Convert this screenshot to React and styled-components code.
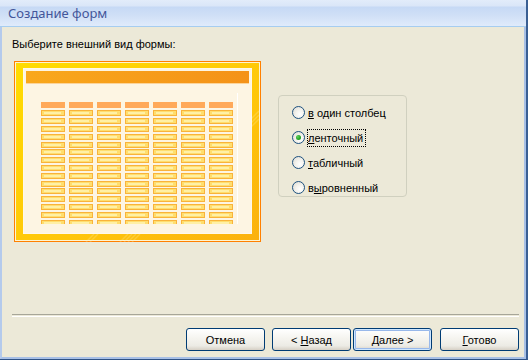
import React from 'react';
import styled, { createGlobalStyle } from 'styled-components';

const GlobalStyle = createGlobalStyle`
  html, body {
    margin: 0;
    padding: 0;
    background: #ece9d8;
  }
  body {
    font-family: 'Liberation Sans', Arial, sans-serif;
  }
`;

const COLS = 7;
const ROW_TOPS = [49, 57, 65, 73, 81, 88, 96, 104, 112, 120, 127, 135, 143, 151, 159];

const options = [
  { pre: '', key: 'в', post: ' один столбец' },
  { pre: '', key: 'л', post: 'енточный', checked: true },
  { pre: '', key: 'т', post: 'абличный' },
  { pre: 'в', key: 'ы', post: 'ровненный' },
];

const buttons = [
  { label: 'Отмена', gap: 0 },
  { pre: '< ', key: 'Н', post: 'азад', gap: 7 },
  { key: 'Д', post: 'алее >', gap: 2, isDefault: true },
  { key: 'Г', post: 'отово', gap: 8 },
];

const Preview = () => (
  <svg width="247" height="181" viewBox="0 0 247 181">
    <defs>
      <linearGradient id="frame" x1="0" y1="0" x2="1" y2="1">
        <stop offset="0" stopColor="#ffdc00" />
        <stop offset="0.6" stopColor="#ffc60a" />
        <stop offset="1" stopColor="#fbb10e" />
      </linearGradient>
      <linearGradient id="head" x1="0" y1="0" x2="1" y2="0">
        <stop offset="0" stopColor="#f9a81c" />
        <stop offset="1" stopColor="#f49218" />
      </linearGradient>
      <clipPath id="table">
        <rect x="0" y="0" width="247" height="163" />
      </clipPath>
    </defs>
    <rect x="0.5" y="0.5" width="246" height="180" fill="#fff4d0" stroke="#ff8000" />
    <rect x="2" y="2" width="243" height="177" fill="url(#frame)" />
    <g opacity="0.25" stroke="#fff3b0" strokeWidth="1.5">
      <line x1="72" y1="181" x2="80" y2="173" />
      <line x1="76" y1="181" x2="84" y2="173" />
      <line x1="106" y1="181" x2="114" y2="173" />
      <line x1="110" y1="181" x2="118" y2="173" />
      <line x1="114" y1="181" x2="122" y2="173" />
      <line x1="118" y1="181" x2="126" y2="173" />
      <line x1="237" y1="58" x2="245" y2="50" />
      <line x1="237" y1="62" x2="245" y2="54" />
      <line x1="237" y1="66" x2="245" y2="58" />
    </g>
    <rect x="9.5" y="7.5" width="228" height="165" fill="#fdf5e3" stroke="#fff8ea" />
    <rect x="12" y="10" width="223" height="12" fill="url(#head)" />
    <rect x="12" y="22" width="223" height="1" fill="#fcd49a" />
    <rect x="223" y="32" width="1" height="131" fill="#ffffff" />
    {Array.from({ length: COLS }).map((_, c) => (
      <rect key={'h' + c} x={27 + c * 28} y="41" width="24" height="6" fill="#ffa95a" />
    ))}
    <g clipPath="url(#table)">
      {ROW_TOPS.map((y) =>
        Array.from({ length: COLS }).map((_, c) => {
          const x = 27 + c * 28;
          return (
            <g key={y + '-' + c}>
              <rect x={x} y={y} width="24" height="6" fill="#f9b33a" />
              <rect x={x + 1} y={y + 1} width="22" height="4" fill="#ffde6e" />
              <rect x={x + 3} y={y + 2} width="17" height="2" fill="#fff0a6" />
            </g>
          );
        })
      )}
    </g>
  </svg>
);

const App = () => (
  <>
    <GlobalStyle />
    <Window>
      <TitleBar>Создание форм</TitleBar>
      <Body>
        <Prompt>Выберите внешний вид формы:</Prompt>
        <Row>
          <PreviewBox>
            <Preview />
          </PreviewBox>
          <Group>
            {options.map((o, i) => (
              <RadioRow key={i}>
                <RadioCircle $checked={o.checked} />
                <RadioLabel $focused={o.checked}>
                  {o.pre}
                  <u>{o.key}</u>
                  {o.post}
                </RadioLabel>
              </RadioRow>
            ))}
          </Group>
        </Row>
        <Separator />
        <ButtonBar>
          {buttons.map((b, i) => (
            <Button key={i} $gap={b.gap} $default={b.isDefault}>
              {b.label ? (
                b.label
              ) : (
                <span>
                  {b.pre}
                  <u>{b.key}</u>
                  {b.post}
                </span>
              )}
            </Button>
          ))}
        </ButtonBar>
      </Body>
    </Window>
  </>
);

export default App;

const Window = styled.div`
  width: 528px;
  height: 360px;
  box-sizing: border-box;
  display: flex;
  flex-direction: column;
  border-right: 2px solid #3a5f93;
  border-bottom: 1px solid #2f5285;
  background: #ece9d8;
  overflow: hidden;
`;

const TitleBar = styled.div`
  height: 26px;
  flex-shrink: 0;
  box-sizing: border-box;
  padding-left: 8px;
  border-bottom: 1px solid #a6cdf0;
  background: linear-gradient(
    #e2ecfa 0,
    #dae6f8 6px,
    #c6d9f5 7px,
    #cfdff6 15px,
    #e0ebfb 26px
  );
  color: #43569a;
  font-family: 'Noto Sans', 'Open Sans', sans-serif;
  font-size: 13px;
  line-height: 27px;
  height: 27px;
`;

const Body = styled.div`
  flex: 1;
  display: flex;
  flex-direction: column;
  box-sizing: border-box;
  border-left: 2px solid #b4caec;
  border-right: 2px solid #a8c0e6;
  border-bottom: 2px solid #a8c0e6;
  padding: 10px 0 6px 10px;
  font-size: 11px;
  color: #000;
`;

const Prompt = styled.div`
  line-height: 14px;
  height: 14px;
`;

const Row = styled.div`
  display: flex;
  align-items: flex-start;
  margin-top: 10px;
  padding-left: 2px;
`;

const PreviewBox = styled.div`
  width: 247px;
  height: 181px;
  svg {
    display: block;
  }
`;

const Group = styled.div`
  margin-left: 17px;
  margin-top: 34px;
  width: 129px;
  height: 102px;
  box-sizing: border-box;
  border: 1px solid #d0d0bf;
  border-radius: 4px;
  padding: 4px 0 0 13px;
`;

const RadioRow = styled.div`
  display: flex;
  align-items: center;
  height: 25px;
`;

const RadioCircle = styled.span`
  width: 13px;
  height: 13px;
  box-sizing: border-box;
  border-radius: 50%;
  border: 1px solid #1c5180;
  background: radial-gradient(circle at 65% 65%, #ffffff 0, #f4f3ee 40%, #dcd9cf 100%);
  position: relative;
  flex-shrink: 0;

  &::after {
    content: '';
    display: ${(p) => (p.$checked ? 'block' : 'none')};
    position: absolute;
    left: 3px;
    top: 3px;
    width: 5px;
    height: 5px;
    border-radius: 50%;
    background: radial-gradient(circle at 35% 35%, #5fd25f 0, #21a121 60%, #1a8a1a 100%);
  }
`;

const RadioLabel = styled.span`
  margin-left: ${(p) => (p.$focused ? '2px' : '3px')};
  line-height: 14px;
  padding: ${(p) => (p.$focused ? '1px 2px 1px 0' : '0')};
  border: ${(p) => (p.$focused ? '1px dotted #000' : 'none')};
  white-space: nowrap;
  u {
    text-decoration-thickness: 1px;
  }
`;

const Separator = styled.div`
  margin: auto 5px 0 0;
  height: 1px;
  border-top: 1px solid #a7a699;
  border-bottom: 1px solid #ffffff;
`;

const ButtonBar = styled.div`
  display: flex;
  justify-content: flex-end;
  margin-top: 11px;
  padding-right: 5px;
`;

const Button = styled.button`
  width: 79px;
  height: 23px;
  margin-left: ${(p) => p.$gap}px;
  box-sizing: border-box;
  border: 1px solid #003c74;
  border-radius: 3px;
  background: linear-gradient(#ffffff 0, #f5f4ef 45%, #ecebe5 80%, #d6d0c5 100%);
  box-shadow: ${(p) =>
    p.$default ? 'inset 0 0 0 1px #cee7ff, inset 0 0 0 2px #98b8ea' : 'none'};
  font-family: 'Liberation Sans', Arial, sans-serif;
  font-size: 11px;
  color: #000;
  padding: 0;
  cursor: pointer;
`;
